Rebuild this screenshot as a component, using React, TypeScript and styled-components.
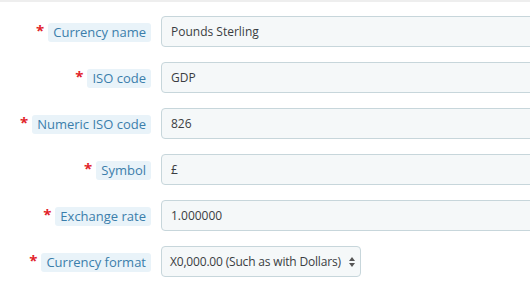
import React from "react";
import styled, { createGlobalStyle } from "styled-components";

const Global = createGlobalStyle`
  html, body { margin: 0; padding: 0; background: #fff; overflow: hidden; }
  body { font-family: "Open Sans", "Noto Sans", sans-serif; }
`;

const Panel = styled.div`
  border-top: 2px solid #eeeeee;
  padding-top: 14px;
  display: flex;
  flex-direction: column;
  gap: 15px;
  margin-right: -20px;
`;

const Row = styled.div`
  display: grid;
  grid-template-columns: 151px 1fr;
  column-gap: 10px;
  align-items: center;
  height: 31px;
`;

const LabelCell = styled.div`
  display: flex;
  justify-content: flex-end;
  align-items: center;
  gap: 4px;
  padding-top: 2px;
`;

const Star = styled.span`
  color: #e2232a;
  font-size: 15px;
  font-weight: 700;
  line-height: 1;
  position: relative;
  top: -2px;
`;

const LabelText = styled.span`
  background: #e9f3f9;
  color: #3b7eab;
  font-size: 13px;
  line-height: 19px;
  padding: 0 5px;
  border-radius: 3px;
`;

const Field = styled.div<{ $narrow?: boolean }>`
  box-sizing: border-box;
  height: 31px;
  background: #f5f8f9;
  border: 1px solid #c7d6db;
  border-radius: 4px;
  display: flex;
  align-items: center;
  padding: 0 6px 0 9px;
  font-size: 12px;
  color: #3a3d42;
  ${(p) =>
    p.$narrow
      ? "width: 200px; padding: 0 5px 0 8px; justify-content: space-between; letter-spacing: -0.18px;"
      : ""}
`;

const Arrows = () => (
  <svg width="6" height="10" viewBox="0 0 6 10">
    <path d="M3 0 L6 4 L0 4 Z" fill="#555" />
    <path d="M3 10 L6 6 L0 6 Z" fill="#555" />
  </svg>
);

const rows: [string, string][] = [
  ["Currency name", "Pounds Sterling"],
  ["ISO code", "GDP"],
  ["Numeric ISO code", "826"],
  ["Symbol", "£"],
  ["Exchange rate", "1.000000"],
];

export default function App() {
  return (
    <>
      <Global />
      <Panel>
        {rows.map(([l, v]) => (
          <Row key={l}>
            <LabelCell>
              <Star>*</Star>
              <LabelText>{l}</LabelText>
            </LabelCell>
            <Field>{v}</Field>
          </Row>
        ))}
        <Row>
          <LabelCell>
            <Star>*</Star>
            <LabelText>Currency format</LabelText>
          </LabelCell>
          <div>
            <Field $narrow>
              <span>X0,000.00 (Such as with Dollars)</span>
              <Arrows />
            </Field>
          </div>
        </Row>
      </Panel>
    </>
  );
}
